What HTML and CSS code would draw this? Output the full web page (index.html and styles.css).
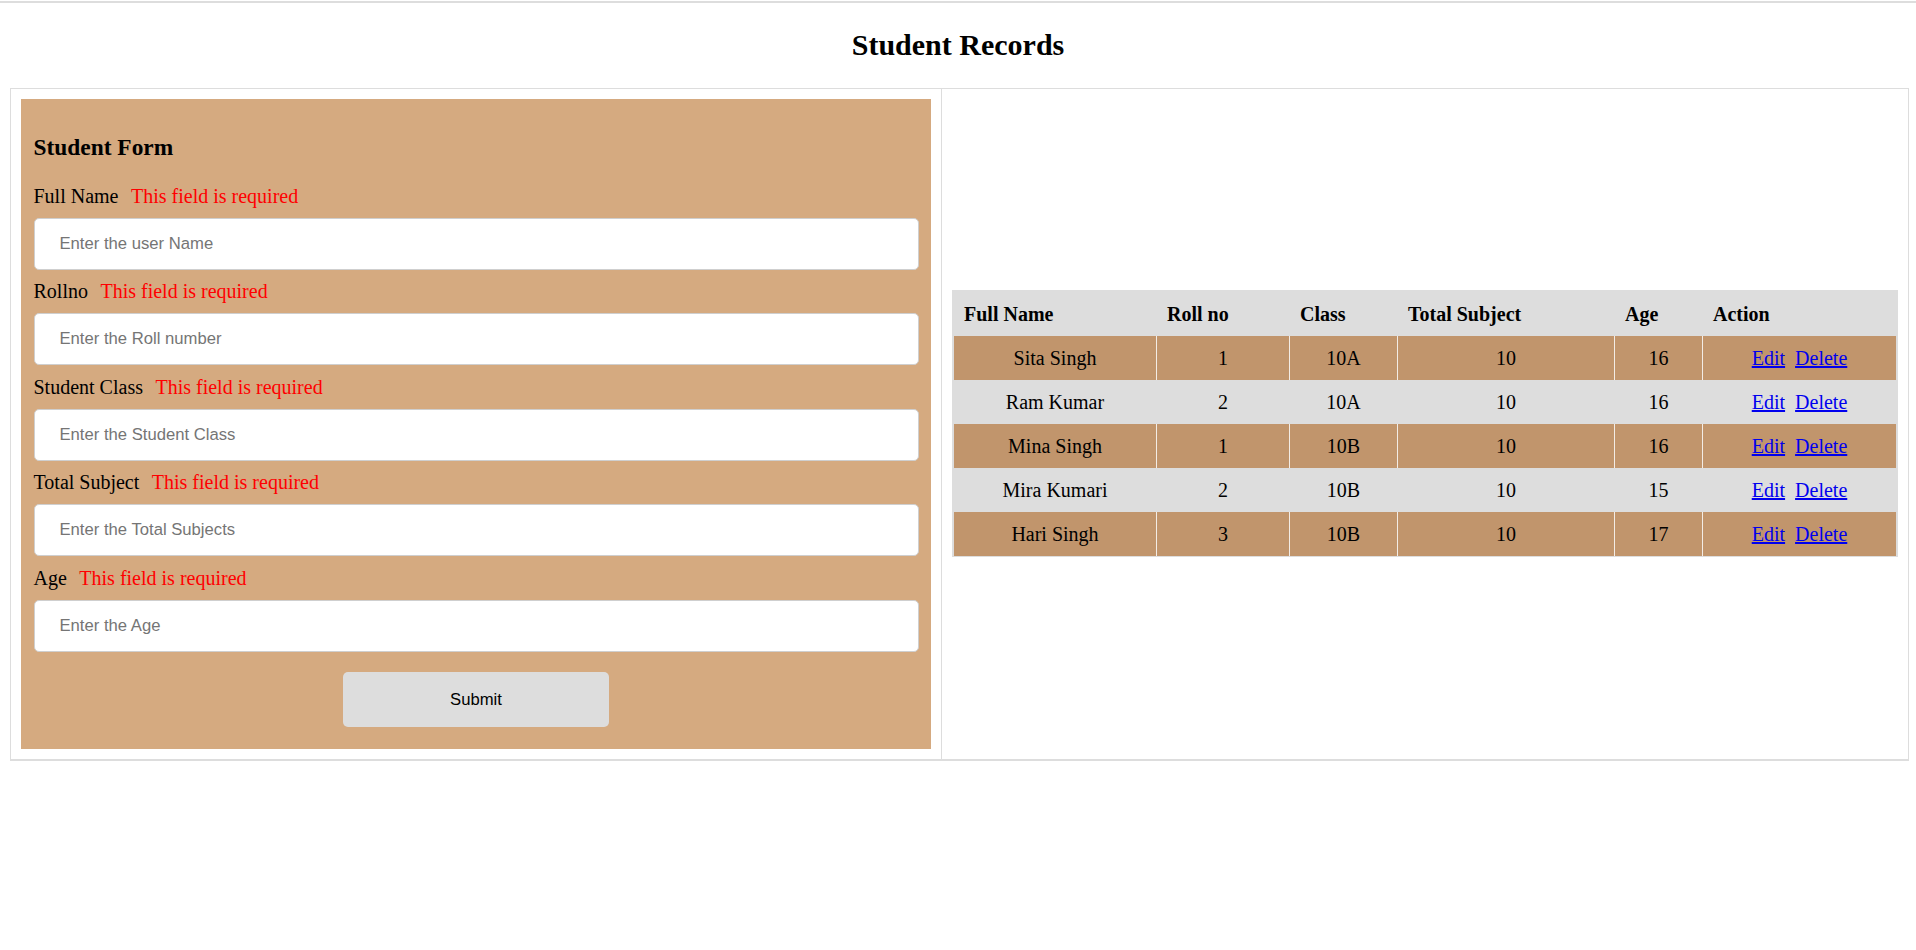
FILE: index.html
```html
<!DOCTYPE html>
<html lang="en">
<head>
<meta charset="utf-8">
<title>Student Records</title>
<link rel="stylesheet" href="styles.css">
</head>
<body>
<div class="topline"></div>
<h2 class="title">Student Records</h2>
<div class="layout">
  <div class="form-cell">
    <form class="student-form">
      <h3 class="form-title">Student Form</h3>
      <div class="field">
        <div class="label">Full Name<span class="error">This field is required</span></div>
        <input class="input" type="text" placeholder="Enter the user Name">
      </div>
      <div class="field">
        <div class="label">Rollno<span class="error">This field is required</span></div>
        <input class="input" type="text" placeholder="Enter the Roll number">
      </div>
      <div class="field">
        <div class="label">Student Class<span class="error">This field is required</span></div>
        <input class="input" type="text" placeholder="Enter the Student Class">
      </div>
      <div class="field">
        <div class="label">Total Subject<span class="error">This field is required</span></div>
        <input class="input" type="text" placeholder="Enter the Total Subjects">
      </div>
      <div class="field">
        <div class="label">Age<span class="error">This field is required</span></div>
        <input class="input" type="text" placeholder="Enter the Age">
      </div>
      <div class="actions">
        <button class="submit" type="button">Submit</button>
      </div>
    </form>
  </div>
  <div class="table-cell">
    <table class="records">
      <thead>
        <tr>
          <th class="c1">Full Name</th>
          <th class="c2">Roll no</th>
          <th class="c3">Class</th>
          <th class="c4">Total Subject</th>
          <th class="c5">Age</th>
          <th class="c6">Action</th>
        </tr>
      </thead>
      <tbody>
        <tr class="odd"><td>Sita Singh</td><td>1</td><td>10A</td><td>10</td><td>16</td><td><a href="#" class="edit">Edit</a> <a href="#">Delete</a></td></tr>
        <tr class="even"><td>Ram Kumar</td><td>2</td><td>10A</td><td>10</td><td>16</td><td><a href="#" class="edit">Edit</a> <a href="#">Delete</a></td></tr>
        <tr class="odd"><td>Mina Singh</td><td>1</td><td>10B</td><td>10</td><td>16</td><td><a href="#" class="edit">Edit</a> <a href="#">Delete</a></td></tr>
        <tr class="even"><td>Mira Kumari</td><td>2</td><td>10B</td><td>10</td><td>15</td><td><a href="#" class="edit">Edit</a> <a href="#">Delete</a></td></tr>
        <tr class="odd"><td>Hari Singh</td><td>3</td><td>10B</td><td>10</td><td>17</td><td><a href="#" class="edit">Edit</a> <a href="#">Delete</a></td></tr>
      </tbody>
    </table>
  </div>
</div>
</body>
</html>
```

FILE: styles.css
```css
html, body {
  margin: 0;
  padding: 0;
  background: #fff;
}

body {
  font-family: "Liberation Serif", "Times New Roman", serif;
  font-size: 20px;
  color: #000;
}

.topline {
  height: 2px;
  margin-top: 1px;
  background: #dddddd;
}

.title {
  margin: 25px 0;
  font-size: 30px;
  line-height: 34.5px;
  font-weight: bold;
  text-align: center;
}

.layout {
  display: flex;
  margin: 0 7px 0 10px;
  border: 1px solid #dddddd;
  border-bottom-width: 2px;
}

.form-cell {
  width: 931px;
  flex: none;
  box-sizing: border-box;
  padding: 10px;
  border-right: 1px solid #dddddd;
}

.table-cell {
  flex: 1;
  display: flex;
  align-items: center;
  padding: 10px;
  min-width: 0;
}

.student-form {
  background: #d5aa80;
  padding: 12.5px;
}

.form-title {
  margin: 23.4px 0;
  font-size: 23.4px;
  line-height: 27px;
  font-weight: bold;
}

.field {
  margin-bottom: 10.5px;
}

.label {
  line-height: 23px;
  margin-bottom: 10px;
}

.error {
  color: #ff0000;
  margin-left: 12.5px;
}

.input {
  display: block;
  width: 100%;
  box-sizing: border-box;
  height: 52px;
  padding: 0 25px;
  border: 1px solid #cfcfcf;
  border-radius: 5px;
  background: #fff;
  font-family: "Liberation Sans", Arial, sans-serif;
  font-size: 16.67px;
  color: #000;
  outline: none;
}

.input::placeholder {
  color: #757575;
}

.actions {
  display: flex;
  justify-content: center;
  padding-top: 10px;
  padding-bottom: 9.5px;
}

.submit {
  width: 266px;
  height: 55px;
  border: none;
  border-radius: 5px;
  background: #dddddd;
  font-family: "Liberation Sans", Arial, sans-serif;
  font-size: 16.67px;
  color: #000;
  cursor: pointer;
}

.records {
  width: 100%;
  table-layout: fixed;
  border-collapse: separate;
  border-spacing: 0;
  background: #dddddd;
  border: 2px solid #dddddd;
  border-bottom-width: 1px;
}

.records th,
.records td {
  box-sizing: border-box;
  line-height: 24px;
  padding: 10px;
}

.records th {
  text-align: left;
  font-weight: bold;
  padding-left: 10px;
}

.records td {
  text-align: center;
}

.records td + td {
  border-left: 1px solid #dddddd;
}

.records .odd td {
  background: #c1956c;
}

.records .odd td + td {
  border-left-color: #f3ece5;
}

.records .even td {
  background: #dddddd;
}

.c1 { width: 202px; }
.c2 { width: 133px; }
.c3 { width: 108px; }
.c4 { width: 217px; }
.c5 { width: 88px; }
.c6 { width: auto; }

.records th + th {
  padding-left: 11px;
}

.records a {
  color: #0000ee;
  text-decoration: underline;
}

.records .edit {
  margin-right: 5px;
}
```
